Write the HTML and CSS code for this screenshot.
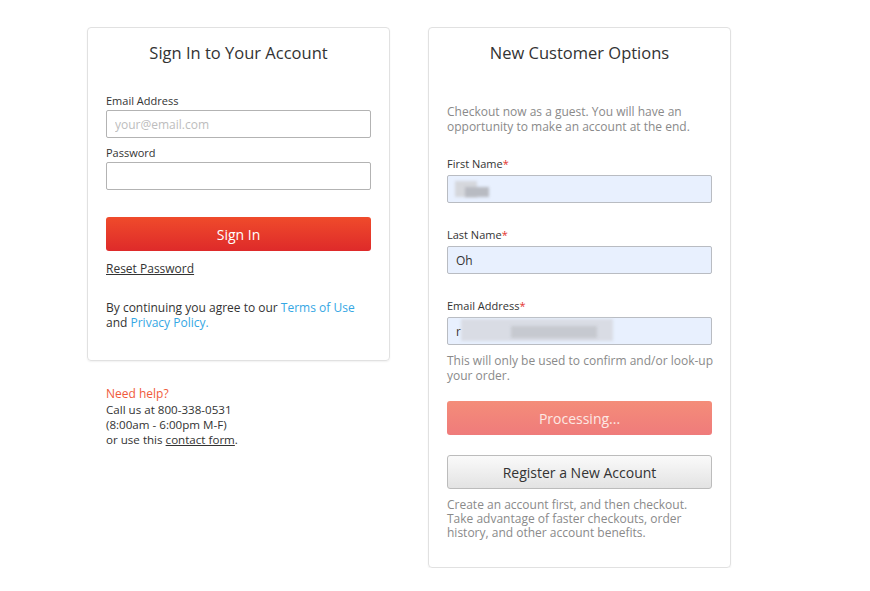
FILE: index.html
```html
<!DOCTYPE html>
<html lang="en">
<head>
    <meta charset="UTF-8">
    <title>Sign In</title>
    <link rel="stylesheet" href="styles.css">
</head>
<body>
    <div class="wrap">
        <!-- left column -->
        <div class="col">
            <div class="card">
                <h2 class="title">Sign In to Your Account</h2>
                <form class="signin">
                    <label class="lbl first">Email Address</label>
                    <input type="text" class="inp" placeholder="your@email.com">
                    <label class="lbl">Password</label>
                    <input type="password" class="inp">
                    <button type="button" class="btn btn-red">Sign In</button>
                </form>
                <a href="#" class="reset">Reset Password</a>
                <p class="terms">By continuing you agree to our <a href="#">Terms of Use</a><br>and <a href="#">Privacy Policy.</a></p>
            </div>
            <div class="help">
                <div class="help-title">Need help?</div>
                Call us at 800-338-0531<br>
                (8:00am - 6:00pm M-F)<br>
                or use this <a href="#">contact form</a>.
            </div>
        </div>

        <!-- right column -->
        <div class="col">
            <div class="card card-new">
                <h2 class="title">New Customer Options</h2>
                <p class="note intro">Checkout now as a guest. You will have an<br>opportunity to make an account at the end.</p>
                <label class="lbl r first">First Name<span class="req">*</span></label>
                <div class="field">
                    <input type="text" class="inp auto" value="">
                    <span class="blur b1"></span>
                    <span class="blur b2"></span>
                </div>
                <label class="lbl r">Last Name<span class="req">*</span></label>
                <div class="field">
                    <input type="text" class="inp auto" value="Oh">
                </div>
                <label class="lbl r">Email Address<span class="req">*</span></label>
                <div class="field">
                    <input type="text" class="inp auto" value="r">
                    <span class="blur b3"></span>
                    <span class="blur b4"></span>
                </div>
                <p class="note">This will only be used to confirm and/or look-up<br>your order.</p>
                <button type="button" class="btn btn-busy">Processing...</button>
                <button type="button" class="btn btn-gray">Register a New Account</button>
                <p class="note small">Create an account first, and then checkout.<br>Take advantage of faster checkouts, order<br>history, and other account benefits.</p>
            </div>
        </div>
    </div>
</body>
</html>
```

FILE: styles.css
```css
body {
    margin: 0;
    background: #fff;
    color: #333;
    font-family: "Open Sans", "Liberation Sans", sans-serif;
    font-size: 12px;
}
a { color: #35a7e4; text-decoration: none; }

.wrap {
    display: flex;
    align-items: flex-start;
    gap: 38px;
    padding: 27px 0 0 87px;
}
.col { width: 303px; }

.card {
    box-sizing: border-box;
    width: 303px;
    border: 1px solid #e1e1e1;
    border-radius: 4px;
    box-shadow: 0 1px 2px rgba(0, 0, 0, 0.06);
    padding: 13px 18px 30px 18px;
}
.card-new { padding-bottom: 27px; }
.title {
    margin: 0;
    font-size: 16.5px;
    font-weight: normal;
    line-height: 24px;
    text-align: center;
    color: #333;
}

.signin { display: flex; flex-direction: column; }
.lbl {
    display: block;
    font-size: 11px;
    line-height: 16px;
    margin-top: 7px;
    margin-bottom: 1px;
    color: #333;
}
.lbl.first { margin-top: 28px; }
.lbl.r { margin-top: 24px; margin-bottom: 3px; }
.lbl.r.first { margin-top: 22px; }
.req { color: #e4352f; }

.inp {
    box-sizing: border-box;
    display: block;
    width: 100%;
    height: 28px;
    margin: 0;
    padding: 0 8px;
    border: 1px solid #b3b3b3;
    border-radius: 2px;
    font-family: inherit;
    font-size: 12px;
    color: #333;
    background: #fff;
}
.inp::placeholder { color: #bdbdbd; }
.inp.auto {
    background: #e8f0fe;
    border-color: #b9bcc2;
}

.field { position: relative; }
.blur {
    position: absolute;
    filter: blur(1.5px);
}
.b1 { left: 8px; top: 6px; width: 22px; height: 16px; background: #d5d7dc; }
.b2 { left: 18px; top: 12px; width: 24px; height: 10px; background: #b8bbc2; }
.b3 { left: 14px; top: 2px; width: 152px; height: 22px; background: #d9dce4; }
.b4 { left: 64px; top: 9px; width: 86px; height: 12px; background: #c6c9d0; }

.btn {
    box-sizing: border-box;
    display: block;
    width: 100%;
    height: 34px;
    border: none;
    border-radius: 3px;
    font-family: inherit;
    font-size: 14px;
    cursor: pointer;
}
.btn-red {
    margin-top: 27px;
    color: #fff;
    background: linear-gradient(#ef4b2b, #de2a2a);
}
.btn-busy {
    margin-top: 18px;
    color: #fde9e4;
    background: linear-gradient(#f48d79, #ef7b7b);
}
.btn-gray {
    margin-top: 20px;
    color: #333;
    border: 1px solid #bcbcbc;
    background: linear-gradient(#fafafa, #e3e3e3);
}

.reset {
    display: inline-block;
    margin-top: 10px;
    line-height: 16px;
    color: #333;
    text-decoration: underline;
}
.terms {
    margin: 23px 0 0;
    line-height: 15px;
}

.note {
    margin: 8px 0 0;
    line-height: 15px;
    color: #8a8a8a;
    white-space: nowrap;
}
.note.intro { margin-top: 39px; }
.note.small { margin-top: 9px; line-height: 14px; }
.col .card + .help { margin-top: 25px; }

.help {
    padding-left: 19px;
    font-size: 11.6px;
    line-height: 15px;
    color: #333;
}
.help-title { color: #f05a3b; font-size: 12px; margin-bottom: 1px; }
.help a { color: #333; text-decoration: underline; }
```
